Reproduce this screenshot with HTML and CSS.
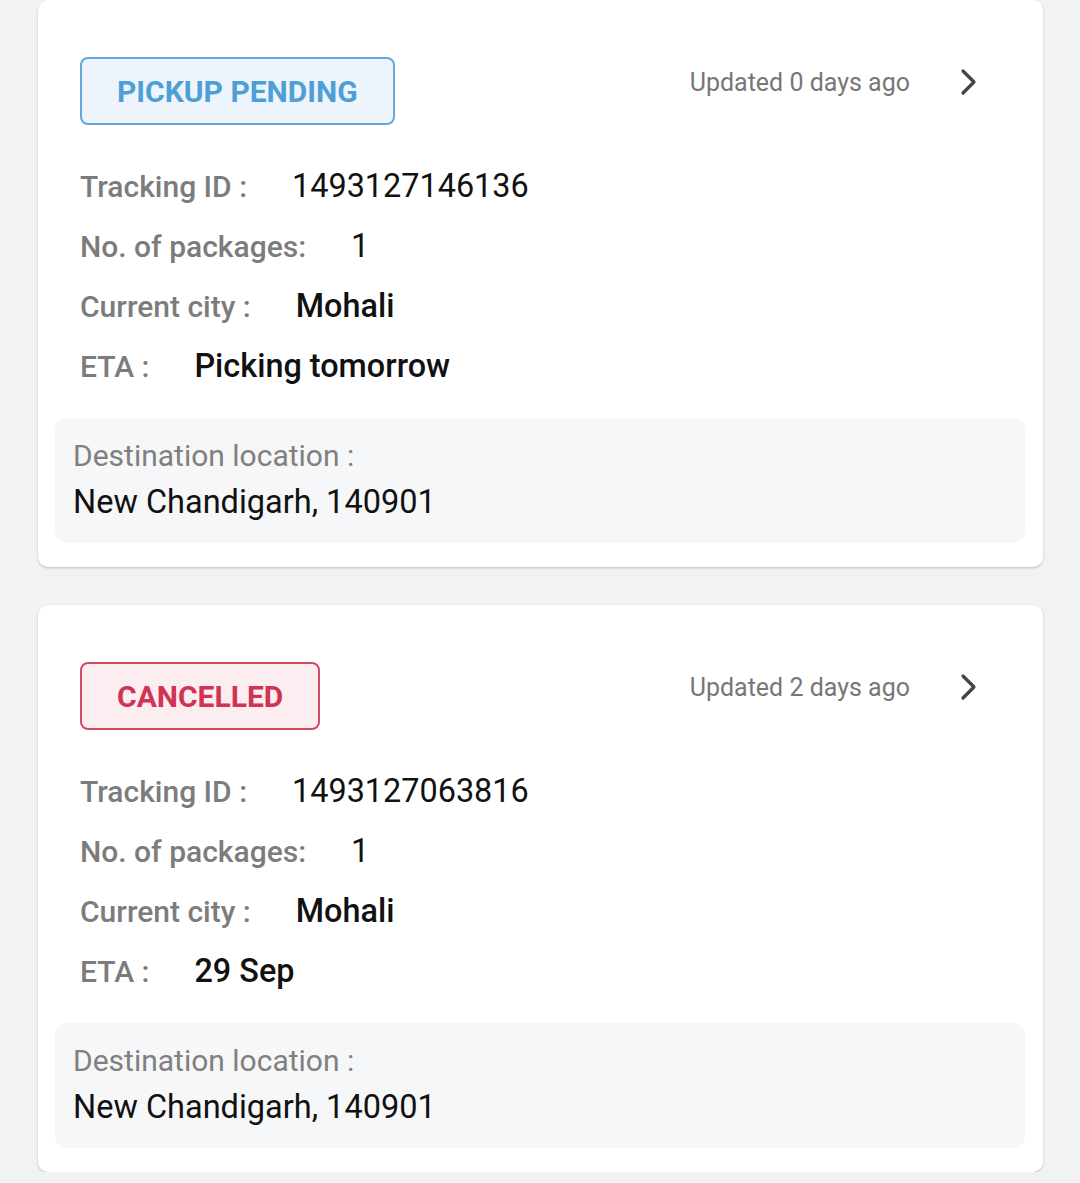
FILE: index.html
```html
<!DOCTYPE html>
<html>
<head>
<meta charset="utf-8">
<link rel="stylesheet" href="styles.css">
</head>
<body>
<div class="list">
  <div class="card">
    <div class="head">
      <div class="badge badge-pending">PICKUP PENDING</div>
      <div class="updated">
        <span class="updated-text">Updated 0 days ago</span>
        <svg class="chev" width="20" height="28" viewBox="0 0 20 28"><path d="M5 3 L16 14 L5 25" fill="none" stroke="#444" stroke-width="3.2" stroke-linecap="round" stroke-linejoin="round"/></svg>
      </div>
    </div>
    <div class="rows">
      <div class="row"><span class="lbl">Tracking ID :</span><span class="val">1493127146136</span></div>
      <div class="row"><span class="lbl">No. of packages:</span><span class="val">1</span></div>
      <div class="row"><span class="lbl">Current city :</span><span class="val strong">Mohali</span></div>
      <div class="row"><span class="lbl">ETA :</span><span class="val strong">Picking tomorrow</span></div>
    </div>
    <div class="dest">
      <div class="dest-lbl">Destination location :</div>
      <div class="dest-val">New Chandigarh, 140901</div>
    </div>
  </div>
  <div class="card">
    <div class="head">
      <div class="badge badge-cancel">CANCELLED</div>
      <div class="updated">
        <span class="updated-text">Updated 2 days ago</span>
        <svg class="chev" width="20" height="28" viewBox="0 0 20 28"><path d="M5 3 L16 14 L5 25" fill="none" stroke="#444" stroke-width="3.2" stroke-linecap="round" stroke-linejoin="round"/></svg>
      </div>
    </div>
    <div class="rows">
      <div class="row"><span class="lbl">Tracking ID :</span><span class="val">1493127063816</span></div>
      <div class="row"><span class="lbl">No. of packages:</span><span class="val">1</span></div>
      <div class="row"><span class="lbl">Current city :</span><span class="val strong">Mohali</span></div>
      <div class="row"><span class="lbl">ETA :</span><span class="val strong">29 Sep</span></div>
    </div>
    <div class="dest">
      <div class="dest-lbl">Destination location :</div>
      <div class="dest-val">New Chandigarh, 140901</div>
    </div>
  </div>
</div>
</body>
</html>
```
FILE: styles.css
```css
html, body {
  margin: 0;
  padding: 0;
  background: #f1f2f4;
  font-family: Roboto, "Noto Sans", sans-serif;
}
.list {
  display: flex;
  flex-direction: column;
  gap: 38px;
  padding: 0 37px 0 38px;
}
.card {
  background: #fff;
  border-radius: 10px;
  box-shadow: 0 1px 3px rgba(0,0,0,0.16), 0 1px 2px rgba(0,0,0,0.06);
  padding: 57px 18px 24px 17px;
}
.head {
  display: flex;
  justify-content: space-between;
  align-items: flex-start;
  padding: 0 47px 0 25px;
}
.badge {
  box-sizing: border-box;
  height: 68px;
  display: flex;
  align-items: center;
  padding: 0 35px;
  border-radius: 8px;
  border: 2px solid;
  font-weight: 700;
  font-size: 30px;
}
.badge-pending {
  background: #edf4fb;
  border-color: #66a8d9;
  color: #4f9fd7;
}
.badge-cancel {
  background: #fcedf0;
  border-color: #d44a63;
  color: #cf3455;
}
.updated {
  display: flex;
  align-items: center;
  gap: 48px;
  height: 50px;
}
.updated-text {
  font-size: 25px;
  color: #777;
}
.chev { display: block; }
.rows {
  padding: 31px 25px 22px;
}
.row {
  height: 60px;
  display: flex;
  align-items: center;
}
.lbl {
  font-size: 30px;
  color: #7c7c7c;
  font-weight: 500;
  margin-right: 45px;
}
.val {
  font-size: 32.4px;
  color: #111;
}
.val.strong { font-weight: 500; }
.dest {
  background: #f6f7f9;
  border-radius: 12px;
  padding: 20px 18px 21px;
}
.dest-lbl {
  font-size: 30px;
  line-height: 36px;
  color: #808080;
}
.dest-val {
  font-size: 32.5px;
  line-height: 40px;
  margin-top: 8px;
  color: #111;
}
```
